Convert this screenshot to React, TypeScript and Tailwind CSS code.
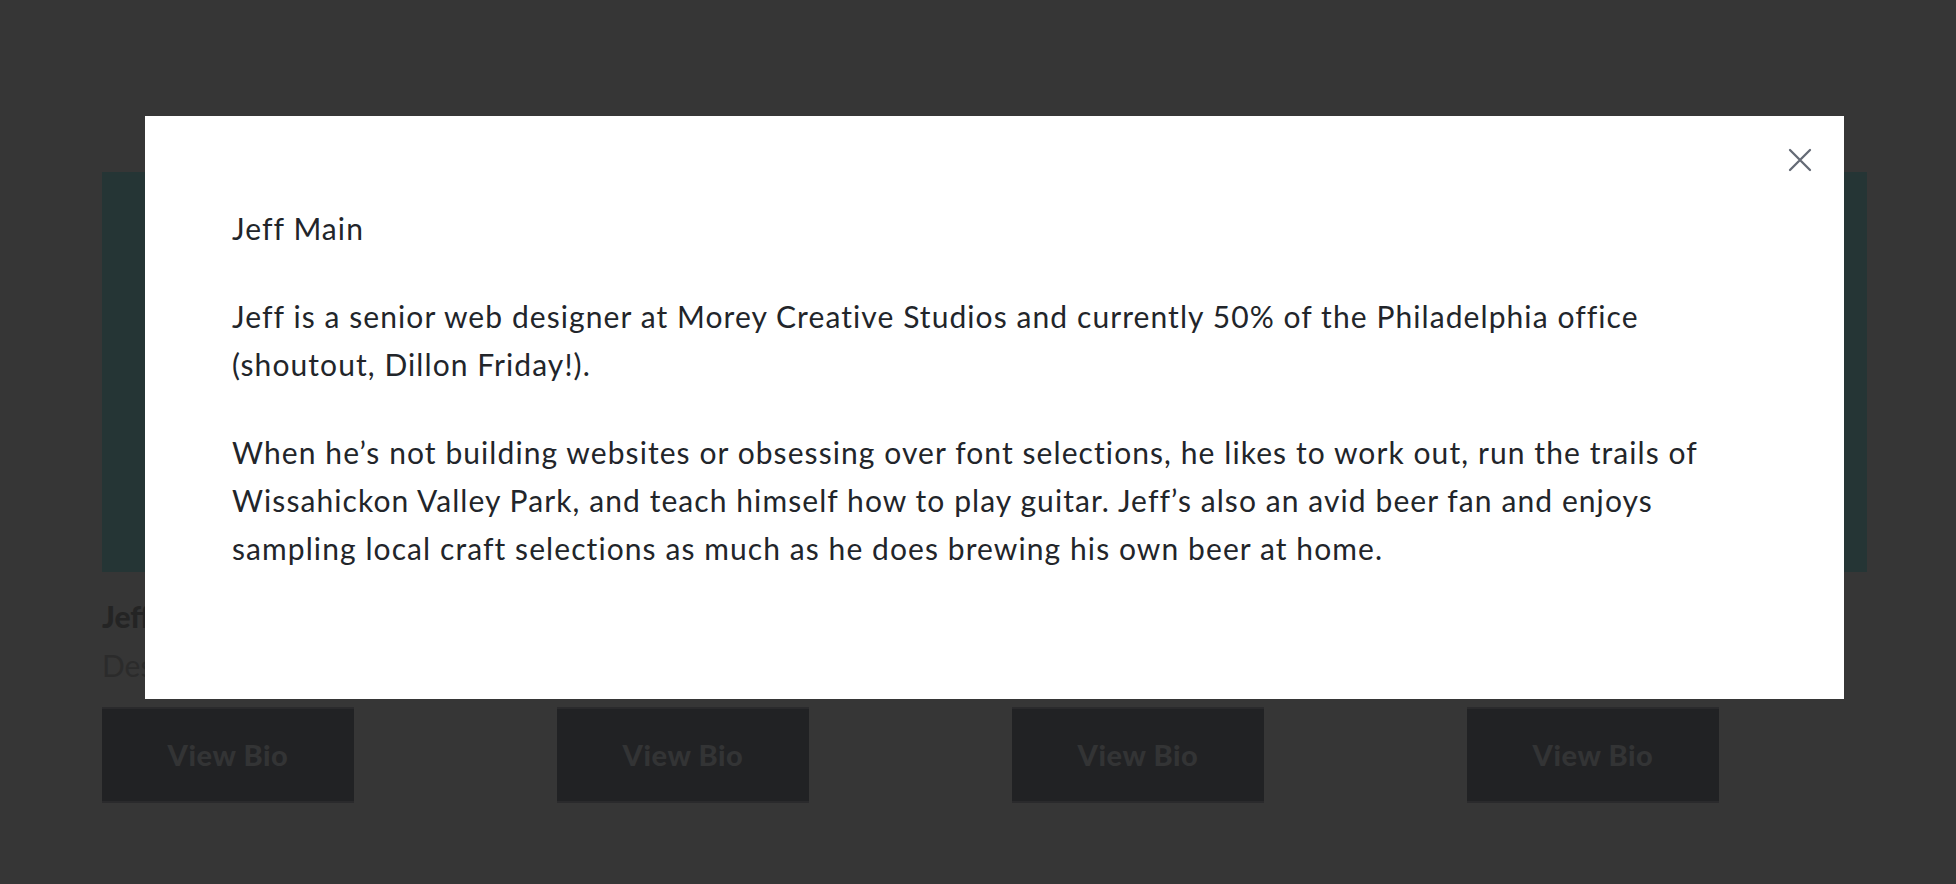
import { useState } from "react";

type Member = {
  name: string;
  title: string;
};

const members: Member[] = [
  { name: "Jeff Main", title: "Designer" },
  { name: "Dillon Friday", title: "Developer" },
  { name: "Kate Morey", title: "Strategist" },
  { name: "Sam Rivera", title: "Producer" },
];

const bio = [
  "Jeff is a senior web designer at Morey Creative Studios and currently 50% of the Philadelphia office (shoutout, Dillon Friday!).",
  "When he\u2019s not building websites or obsessing over font selections, he likes to work out, run the trails of Wissahickon Valley Park, and teach himself how to play guitar. Jeff\u2019s also an avid beer fan and enjoys sampling local craft selections as much as he does brewing his own beer at home.",
];

function TeamCard({ member }: { member: Member }) {
  return (
    <div className="flex w-[400px] flex-col">
      <div className="h-[400px] w-full bg-[#253535]"></div>
      <div className="mt-5 text-[30px] leading-[48px] font-black text-[#242424]">
        {member.name}
      </div>
      <div className="text-[30px] leading-[50px] text-[#2b2b2b]">
        {member.title}
      </div>
      <button className="mt-[17px] flex h-[96px] w-[252px] items-center justify-center border-y-2 border-[#2a2a2c] bg-[#212224] text-[29px] font-black tracking-[0.02em] text-[#333435]">
        View Bio
      </button>
    </div>
  );
}

function BioModal({ onClose }: { onClose: () => void }) {
  return (
    <div className="fixed inset-0 pt-[116px] pl-[145px]">
      <div className="relative w-[1699px] bg-white px-[87px] pt-[88px] pb-[87px] text-[30px] leading-[48px] tracking-[0.036em] text-[#22252a]">
        <button
          onClick={onClose}
          className="absolute top-8 right-8 text-[#646a75]"
          aria-label="Close"
        >
          <svg
            className="h-6 w-6"
            viewBox="0 0 24 24"
            fill="none"
            stroke="currentColor"
            strokeWidth="2.3"
            strokeLinecap="round"
          >
            <path d="M2 2L22 22M22 2L2 22" />
          </svg>
        </button>
        <p className="mb-10">Jeff Main</p>
        {bio.map((text, i) => (
          <p key={i} className="mb-10">
            {text}
          </p>
        ))}
      </div>
    </div>
  );
}

export default function App() {
  const [isOpen, setIsOpen] = useState(true);

  return (
    <div className="relative h-[884px] overflow-hidden bg-[#363636] font-['Lato',sans-serif]">
      <div className="flex gap-[55px] pt-[172px] pl-[102px]">
        {members.map((member) => (
          <TeamCard key={member.name} member={member} />
        ))}
      </div>
      {isOpen && <BioModal onClose={() => setIsOpen(false)} />}
    </div>
  );
}
